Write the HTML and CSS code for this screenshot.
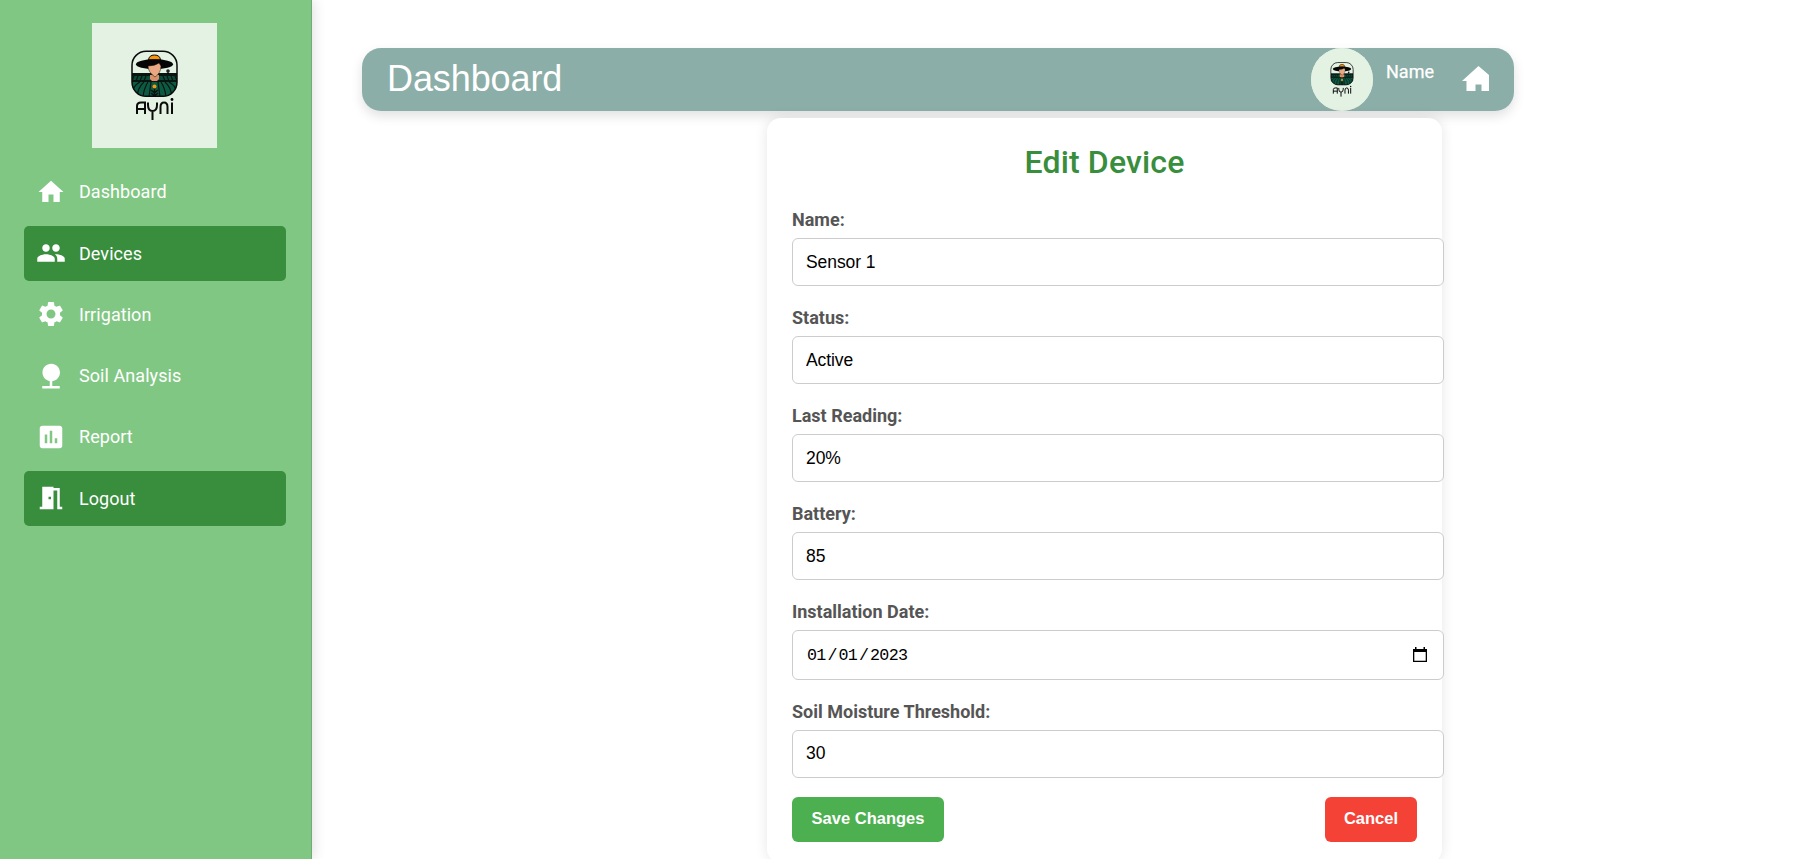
FILE: index.html
```html
<!DOCTYPE html>
<html lang="en">
<head>
<meta charset="utf-8">
<title>Edit Device</title>
<link rel="stylesheet" href="styles.css">
</head>
<body>
<svg class="defs" width="0" height="0">
  <symbol id="ayni" viewBox="0 0 125 125">
    <rect width="125" height="125" fill="#e3f2e3"/>
    <clipPath id="badge"><rect x="40" y="28.300" width="45" height="45" rx="14"/></clipPath>
    <g clip-path="url(#badge)">
      <rect x="40" y="50" width="45" height="25" fill="#0a1512"/>
      <path d="M40 53h45v4H40z" fill="#0c4a37"/>
      <path d="M42 53l-2 5M46 53l-2 5M50 53l-2 5M54 53l-2 5M71 53l2 5M75 53l2 5M79 53l2 5M83 53l2 5" stroke="#0a1512" stroke-width="1.200"/>
      <path d="M40 59h45v15H40z" fill="#0d5a43"/>
      <path d="M59 59Q58 66 57 74M56 59Q52 65 51 74M52 59Q46 64 45 74M48 59Q42 62 40 69M66 59Q67 66 68 74M69 59Q73 65 74 74M73 59Q79 64 80 74M77 59Q83 62 85 69" fill="none" stroke="#0a1512" stroke-width="1.200"/>
      <path d="M58 52h9v4l-2 2h-5l-2-2z" fill="#d9906b"/>
      <path d="M62.500 64v10M59 67l3.500 3 3.500-3M59 70l3.500 3 3.500-3" fill="none" stroke="#07140f" stroke-width="1.600"/>
      <circle cx="62.500" cy="63.500" r="2" fill="#f39a13"/>
    </g>
    <circle cx="76" cy="48" r="1.800" fill="#222"/>
    <path d="M75.500 49h1v2h-1z"/>
    <path d="M56.500 37Q57 32 62.500 32T68.500 37z" fill="#f7960d" stroke="#080808"/>
    <ellipse cx="62.500" cy="41.300" rx="18.500" ry="5" fill="#050505"/>
    <path d="M56 43Q63 43 67 40L69 43Q69 50 63 54Q56 49 56 43z" fill="#e8a982" stroke="#1b0f08" stroke-width=".5"/>
    <rect x="40" y="28.300" width="45" height="45" rx="14" fill="none" stroke="#0b0b0b" stroke-width="1.500"/>
    <path d="M45 91V83Q45 79.500 49 79.500H53V91M45 86H53M56 79.500V82Q56 88 60.500 88T65 82V79.500M60.500 88V97M68.500 91V84Q68.500 79.500 72 79.500T75.500 84V91M80 79.500V91" fill="none" stroke="#0b0b0b" stroke-width="2"/>
    <circle cx="80" cy="76.500" r="1.400"/>
  </symbol>
</svg>
<div class="layout">
  <aside class="sidebar">
    <svg class="logo"><use href="#ayni"/></svg>
    <nav class="menu">
      <a class="item"><svg class="icon" viewBox="0 0 24 24"><path d="M10 20v-6h4v6h5v-8h3L12 3 2 12h3v8z"/></svg>Dashboard</a>
      <a class="item active"><svg class="icon" viewBox="0 0 24 24"><path d="M16 11c1.660 0 2.990-1.340 2.990-3S17.660 5 16 5s-3 1.340-3 3 1.340 3 3 3zm-8 0c1.660 0 2.990-1.340 2.990-3S9.660 5 8 5 5 6.340 5 8s1.340 3 3 3zm0 2c-2.330 0-7 1.170-7 3.500V19h14v-2.500c0-2.330-4.670-3.500-7-3.500zm8 0c-.29 0-.62.02-.97.05 1.160.84 1.970 1.970 1.970 3.450V19h6v-2.500c0-2.330-4.670-3.500-7-3.500z"/></svg>Devices</a>
      <a class="item"><svg class="icon" viewBox="0 0 24 24"><path d="M19.140 12.940c.04-.3.060-.61.060-.94 0-.32-.02-.64-.07-.94l2.030-1.580c.18-.14.230-.41.120-.61l-1.920-3.320c-.12-.22-.37-.29-.59-.22l-2.390.96c-.5-.38-1.030-.7-1.620-.94l-.36-2.540c-.04-.24-.24-.41-.48-.41h-3.840c-.24 0-.43.17-.47.41l-.36 2.540c-.59.240-1.130.57-1.620.94l-2.390-.96c-.22-.08-.47 0-.59.22L2.740 8.870c-.12.210-.08.470.12.610l2.030 1.580c-.05.3-.09.630-.09.940s.02.64.07.94l-2.030 1.580c-.18.14-.23.41-.12.61l1.920 3.320c.12.22.37.29.59.22l2.390-.96c.5.38 1.030.7 1.620.94l.36 2.540c.05.24.24.41.48.41h3.840c.24 0 .44-.17.47-.41l.36-2.540c.59-.24 1.130-.56 1.620-.94l2.390.96c.22.08.47 0 .59-.22l1.920-3.320c.12-.22.07-.47-.12-.61l-2.010-1.580zM12 15.600c-1.980 0-3.600-1.620-3.600-3.600s1.620-3.600 3.600-3.600 3.600 1.620 3.600 3.600-1.620 3.600-3.600 3.600z"/></svg>Irrigation</a>
      <a class="item"><svg class="icon" viewBox="0 0 24 24"><path d="M13 16.120c3.470-.41 6.170-3.360 6.170-6.950 0-3.870-3.130-7-7-7s-7 3.130-7 7c0 3.470 2.520 6.340 5.830 6.890V20H5v2h14v-2h-6v-3.880z"/></svg>Soil Analysis</a>
      <a class="item"><svg class="icon" viewBox="0 0 24 24"><path d="M19 3H5c-1.100 0-2 .9-2 2v14c0 1.100.9 2 2 2h14c1.100 0 2-.9 2-2V5c0-1.100-.9-2-2-2zM9 17H7v-7h2v7zm4 0h-2V7h2v10zm4 0h-2v-4h2v4z"/></svg>Report</a>
      <a class="item active"><svg class="icon" viewBox="0 0 24 24"><path d="M14 6v15H3v-2h2V3h9v1h5v15h2v2h-4V6h-3zm-4 5v2h2v-2h-2z"/></svg>Logout</a>
    </nav>
  </aside>
  <main class="content">
    <header class="topbar">
      <h1 class="title">Dashboard</h1>
      <svg class="avatar"><use href="#ayni"/></svg>
      <span class="user">Name</span>
      <svg class="home" viewBox="0 0 27 30"><path d="M13.500 27v-6.500h6V27H27V11L16.500 2 0 17h4.500v10z"/></svg>
    </header>
    <form class="card">
      <h2 class="heading">Edit Device</h2>
      <label class="label" for="name">Name:</label>
      <input class="field" id="name" value="Sensor 1">
      <label class="label" for="status">Status:</label>
      <input class="field" id="status" value="Active">
      <label class="label" for="reading">Last Reading:</label>
      <input class="field" id="reading" value="20%">
      <label class="label" for="battery">Battery:</label>
      <input class="field" id="battery" value="85">
      <label class="label" for="date">Installation Date:</label>
      <div class="field date" id="date"><span class="digits">01<span class="slash">/</span>01<span class="slash">/</span>2023</span><svg class="calendar" viewBox="0 0 14 15"><path d="M0 2h2V0h1.500v2h7V0H12v2h2v13H0zM1.300 5v8.700h11.400V5z" fill-rule="evenodd"/></svg></div>
      <label class="label" for="soil">Soil Moisture Threshold:</label>
      <input class="field last" id="soil" value="30">
      <div class="actions">
        <button class="button save" type="button">Save Changes</button>
        <button class="button cancel" type="button">Cancel</button>
      </div>
    </form>
  </main>
</div>
</body>
</html>
```
FILE: styles.css
```css
* { box-sizing: border-box; }
body { margin: 0; height: 859px; overflow: hidden; background: #fff; font-family: Roboto, sans-serif; font-size: 18px; }
.defs { position: absolute; }
.layout { display: flex; height: 859px; }
.sidebar { width: 312px; flex: none; padding: 23px 25px 0 24px; background: #81c784; border-right: 1px solid #6fae73; box-shadow: 2px 0 12px rgba(0,0,0,.12); display: flex; flex-direction: column; }
.logo { width: 125px; height: 125px; margin-left: 68px; flex: none; }
.menu { margin-top: 16.750px; display: flex; flex-direction: column; gap: 6.250px; }
.item { height: 55px; display: flex; align-items: center; gap: 13px; padding: 0 12.500px 1px 12px; border-radius: 5px; color: #fff; letter-spacing: .06px; }
.active { background: #388e3c; padding-bottom: 0; }
.icon { width: 30px; height: 30px; margin: 0; fill: #fff; }
.active .icon { margin-top: -1px; }
.content { flex: 1; padding: 48px 282px 0 50px; display: flex; flex-direction: column; }
.topbar { height: 63px; flex: none; display: flex; align-items: center; padding: 0 25px; background: #8caea8; border-radius: 19px; box-shadow: 0 5px 12px rgba(0,0,0,.12); }
.title { margin: -2px auto 0 0; font: 400 36px "Liberation Sans", Arial, sans-serif; letter-spacing: -.1px; color: #fff; }
.avatar { width: 62px; height: 63px; border-radius: 50%; background: #e3f2e3; }
.user { width: 48px; margin: -17px 28px 0 13px; color: #fff; font-size: 18px; -webkit-text-stroke: .25px #fff; }
.home { width: 27px; height: 30px; margin-top: -2px; fill: #fff; }
.card { width: 675px; height: 745px; flex: none; margin: 7px 0 0 405px; padding: 25px 25px 0; background: #fff; border-radius: 14px; box-shadow: 0 0 13px rgba(0,0,0,.1); }
.heading { margin: 0 0 28px; height: 39px; line-height: 39px; text-align: center; color: #388e3c; font-size: 32px; font-weight: 500; letter-spacing: .15px; }
.label { display: block; height: 20px; line-height: 20px; margin-bottom: 8px; color: #555; font-weight: 700; }
.field { display: block; width: 652px; height: 48px; margin: 0 0 22px; padding: 0 13px; border: 1px solid #ccc; border-radius: 6px; background: #fff; color: #000; font: 17.500px "Liberation Sans", Arial, sans-serif; letter-spacing: -.08px; }
.date { height: 50px; display: flex; align-items: center; justify-content: space-between; padding: 0 16px 0 14px; }
.digits { font: 16.700px "Liberation Mono", monospace; letter-spacing: -.65px; }
.slash { margin: 0 1.700px; }
.calendar { width: 14px; height: 15px; margin-top: -2px; }
.last { padding-bottom: 2px; }
.actions { display: flex; justify-content: space-between; margin-top: -3px; }
.button { height: 45px; padding: 0 0 2px; border: 0; border-radius: 6px; color: #fff; font: 700 16.500px "Liberation Sans", Arial, sans-serif; }
.save { width: 152px; background: #4caf50; }
.cancel { width: 92px; background: #f44336; }
```
